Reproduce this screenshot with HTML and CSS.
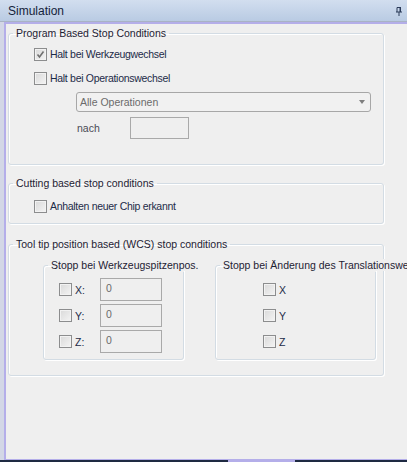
FILE: index.html
```html
<!DOCTYPE html>
<html>
<head>
<meta charset="utf-8">
<link rel="stylesheet" href="styles.css">
</head>
<body>
<div class="window">
  <div class="titlebar">
    <span class="title">Simulation</span>
    <svg class="pin" width="8" height="9" viewBox="0 0 8 9"><path d="M2 0.5H6M2 0.5V5M5 0.5V5M1 5H7M4 5V9" stroke="#2a3a58" stroke-width="1" fill="none"/><rect x="5" y="1" width="1" height="4" fill="#2a3a58"/></svg>
  </div>
  <div class="panel">
    <fieldset class="group g1">
      <legend>Program Based Stop Conditions</legend>
      <div class="row r1"><span class="cb checked"><svg width="9" height="9" viewBox="0 0 9 9"><path d="M1.5 4.5L3.5 7L7.5 1.5" stroke="#707070" stroke-width="1.6" fill="none"/></svg></span><span class="lbl">Halt bei Werkzeugwechsel</span></div>
      <div class="row r2"><span class="cb"></span><span class="lbl">Halt bei Operationswechsel</span></div>
      <div class="combo"><span>Alle Operationen</span><span class="arrow"></span></div>
      <div class="nachrow"><span class="nach">nach</span><span class="field"></span></div>
    </fieldset>
    <fieldset class="group g2">
      <legend>Cutting based stop conditions</legend>
      <div class="row"><span class="cb"></span><span class="lbl">Anhalten neuer Chip erkannt</span></div>
    </fieldset>
    <fieldset class="group g3">
      <legend>Tool tip position based (WCS) stop conditions</legend>
      <div class="inner">
        <fieldset class="sub s1">
          <legend><span>Stopp bei Werkzeugspitzenpos.</span></legend>
          <div class="axis"><span class="cb"></span><span class="lbl ax">X:</span><span class="field val">0</span></div>
          <div class="axis"><span class="cb"></span><span class="lbl ax">Y:</span><span class="field val">0</span></div>
          <div class="axis"><span class="cb"></span><span class="lbl ax">Z:</span><span class="field val">0</span></div>
        </fieldset>
        <fieldset class="sub s2">
          <legend><span>Stopp bei Änderung des Translationswertes</span></legend>
          <div class="axis"><span class="cb"></span><span class="lbl">X</span></div>
          <div class="axis"><span class="cb"></span><span class="lbl">Y</span></div>
          <div class="axis"><span class="cb"></span><span class="lbl">Z</span></div>
        </fieldset>
      </div>
    </fieldset>
  </div>
  <div class="bottombar"><span class="tab"></span></div>
</div>
</body>
</html>
```

FILE: styles.css
```css
html, body {
  margin: 0;
  padding: 0;
}
body {
  width: 407px;
  height: 462px;
  overflow: hidden;
  background: #d3d7e6;
  font-family: "Liberation Sans", Arial, sans-serif;
  font-size: 10.5px;
  color: #1c2b48;
}
.window {
  display: flex;
  flex-direction: column;
  height: 462px;
}
.titlebar {
  height: 21px;
  border-bottom: 1px solid #a9b3c4;
  background: linear-gradient(#d2deef, #b9cbe3);
  display: flex;
  align-items: center;
  justify-content: space-between;
  padding: 0 4px 0 8px;
  flex: none;
}
.title {
  font-size: 12px;
  color: #14233a;
}
.pin {
  margin-top: 1px;
}
.panel {
  flex: 1;
  margin-left: 4px;
  border-left: 2px solid #b4aee9;
  border-top: 2px solid #b4aee9;
  border-bottom: 1px solid #b4aee9;
  background: #efefef;
  padding-top: 2px;
  overflow: hidden;
  min-height: 0;
}
.bottombar {
  height: 2px;
  flex: none;
  background: #1e2a42;
  display: flex;
}
.tab {
  margin-left: 228px;
  width: 67px;
  background: #b4aee9;
}
.group, .sub {
  margin: 0;
  padding: 0;
  min-inline-size: 0;
  border: 1px solid #d3dce4;
  border-radius: 3px;
  box-shadow: 1px 1px 0 #ffffff, inset 1px 1px 0 #ffffff;
}
.group {
  margin-left: 2px;
  width: 376px;
  box-sizing: border-box;
}
legend {
  padding: 0 3px;
  margin-left: 4px;
  line-height: 14px;
  color: #1e2233;
  white-space: nowrap;
}
.g1 {
  padding: 4px 0 25px 0;
}
.g2 {
  margin-top: 11px;
  padding: 6px 0 7px 0;
}
.g3 {
  margin-top: 13px;
  padding: 7px 0 15px 0;
}
.row {
  display: flex;
  align-items: center;
  height: 20px;
  padding-left: 25px;
}
.r2 {
  margin-top: 4px;
}
.cb {
  width: 11px;
  height: 11px;
  border: 1px solid #8c8d8e;
  background: linear-gradient(135deg, #d9d9d9, #f4f4f4);
  box-shadow: inset 0 0 0 1px #f2f2f2;
  display: flex;
  align-items: center;
  justify-content: center;
  flex: none;
}
.lbl {
  margin-left: 3px;
  color: #1c2b48;
}
.row .lbl {
  letter-spacing: -0.3px;
}
.combo {
  margin: 4px 0 0 67px;
  width: 295px;
  height: 20px;
  box-sizing: border-box;
  border: 1px solid #a7a7a7;
  border-radius: 3px;
  background: #f1f1f1;
  display: flex;
  align-items: center;
  justify-content: space-between;
  padding: 0 5px 0 3px;
  color: #6b6b6b;
}
.arrow {
  width: 0;
  height: 0;
  border-left: 3.5px solid transparent;
  border-right: 3.5px solid transparent;
  border-top: 4px solid #7e7e7e;
}
.nachrow {
  margin: 5px 0 0 68px;
  display: flex;
  align-items: center;
  height: 22px;
}
.nach {
  width: 53px;
  color: #4a4a55;
}
.field {
  width: 59px;
  height: 22px;
  box-sizing: border-box;
  border: 1px solid #a9a9a9;
  background: #efefef;
  color: #6b6b6b;
}
.inner {
  display: flex;
  gap: 31px;
  padding-left: 34px;
}
.sub legend span {
  background: #efefef;
  padding-right: 2px;
}
.s1 {
  width: 141px;
  box-sizing: border-box;
  padding: 6px 0 6px 0;
}
.s2 {
  width: 161px;
  box-sizing: border-box;
  padding: 6px 0 6px 0;
}
.axis {
  display: flex;
  align-items: center;
  height: 23px;
  padding-left: 15px;
}
.axis + .axis {
  margin-top: 3px;
}
.s2 .axis {
  padding-left: 47px;
}
.ax {
  width: 25px;
}
.val {
  width: 62px;
  height: 23px;
  padding: 3px 0 0 5px;
}
```
